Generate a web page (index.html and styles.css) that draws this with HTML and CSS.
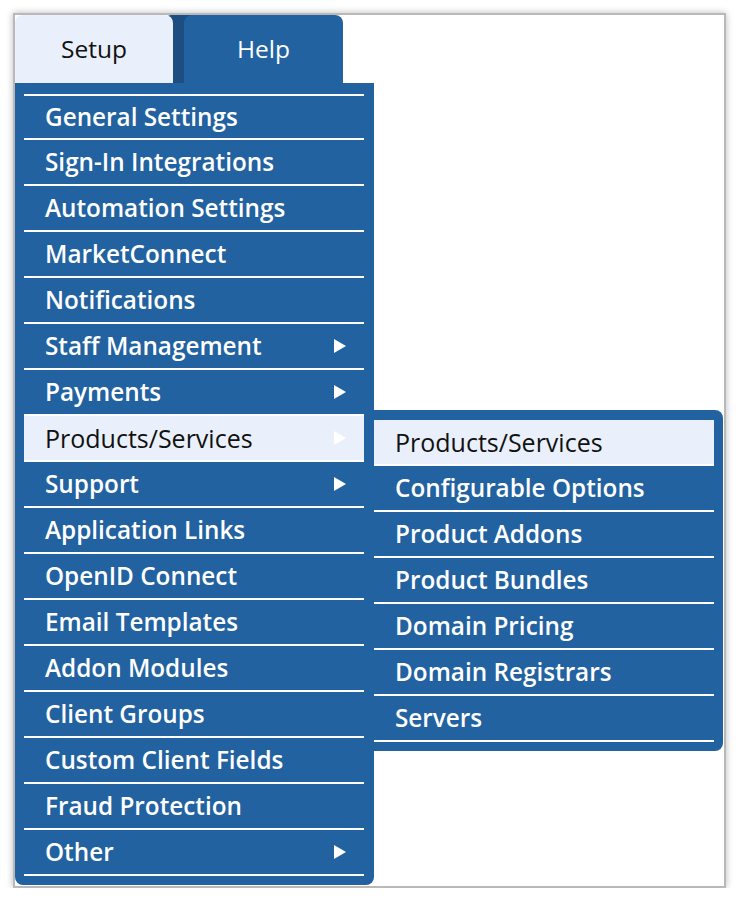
FILE: index.html
```html
<!DOCTYPE html>
<html>
<head>
<meta charset="utf-8">
<link rel="stylesheet" href="styles.css">
</head>
<body>
<div class="frame">
  <div class="tabs">
    <div class="tab tab-active">Setup</div>
    <div class="tab-gap"></div>
    <div class="tab tab-help">Help</div>
  </div>
  <div class="menus">
    <ul class="menu">
      <li class="item">General Settings</li>
      <li class="item">Sign-In Integrations</li>
      <li class="item">Automation Settings</li>
      <li class="item">MarketConnect</li>
      <li class="item">Notifications</li>
      <li class="item">Staff Management<span class="arrow"></span></li>
      <li class="item">Payments<span class="arrow"></span></li>
      <li class="item item-active">Products/Services<span class="arrow"></span></li>
      <li class="item">Support<span class="arrow"></span></li>
      <li class="item">Application Links</li>
      <li class="item">OpenID Connect</li>
      <li class="item">Email Templates</li>
      <li class="item">Addon Modules</li>
      <li class="item">Client Groups</li>
      <li class="item">Custom Client Fields</li>
      <li class="item">Fraud Protection</li>
      <li class="item">Other<span class="arrow"></span></li>
    </ul>
    <ul class="submenu">
      <li class="item item-active">Products/Services</li>
      <li class="item">Configurable Options</li>
      <li class="item">Product Addons</li>
      <li class="item">Product Bundles</li>
      <li class="item">Domain Pricing</li>
      <li class="item">Domain Registrars</li>
      <li class="item">Servers</li>
    </ul>
  </div>
</div>
</body>
</html>
```

FILE: styles.css
```css
* { box-sizing: border-box; }
html, body { margin: 0; padding: 0; background: #fff; }
body {
  font-family: "Open Sans", "DejaVu Sans", sans-serif;
  font-size: 24px;
}
.frame {
  margin: 13px 0 0 13px;
  width: 713px;
  height: 875px;
  border: 2px solid #b9b9b9;
  background: #fff;
  box-shadow: 0 0 7px rgba(0,0,0,0.28);
}
.tabs {
  display: flex;
  height: 68px;
}
.tab {
  width: 158px;
  height: 68px;
  border-radius: 8px 8px 0 0;
  display: flex;
  align-items: center;
  justify-content: center;
  padding-bottom: 2px;
  position: relative;
  z-index: 1;
  font-size: 24.5px;
}
.tab-active { background: #e9f0fb; color: #111; }
.tab-help { width: 159px; background: #2262a0; color: #fff; }
.tab-gap {
  width: 27px;
  margin: 0 -8px;
  background: #1c4e82;
  border-radius: 6px 0 0 0;
}
.menus {
  display: flex;
  align-items: flex-start;
}
ul { list-style: none; margin: 0; }
.menu {
  width: 359px;
  background: #2262a0;
  padding: 11px 10px 9px 9px;
  border-radius: 0 0 8px 8px;
}
.menu::before {
  content: "";
  display: block;
  height: 2px;
  background: #fff;
}
.item {
  height: 46px;
  border-bottom: 2px solid #fff;
  color: #fff;
  font-size: 24.3px;
  font-weight: 580;
  padding: 0 18px 1px 21px;
  display: flex;
  align-items: center;
  justify-content: space-between;
  white-space: nowrap;
}
.menu .item:first-child { height: 44px; }
.item-active {
  background: #e9f0fb;
  color: #111;
  font-size: 25px;
  font-weight: 400;
}
.arrow {
  width: 0;
  height: 0;
  border-top: 7.5px solid transparent;
  border-bottom: 7.5px solid transparent;
  border-left: 12px solid #fff;
}
.submenu {
  margin-top: 327px;
  width: 349px;
  background: #2262a0;
  padding: 10px 9px 9px 0;
  border-radius: 0 8px 8px 0;
}
```
